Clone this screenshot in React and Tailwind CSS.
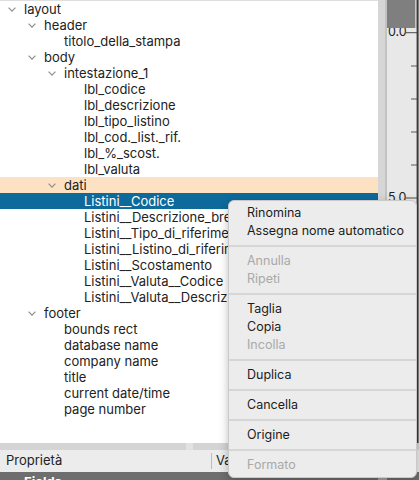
import React from "react";

const rows = [
  { d: 0, t: "layout", c: true },
  { d: 1, t: "header", c: true },
  { d: 2, t: "titolo_della_stampa" },
  { d: 1, t: "body", c: true },
  { d: 2, t: "intestazione_1", c: true },
  { d: 3, t: "lbl_codice" },
  { d: 3, t: "lbl_descrizione" },
  { d: 3, t: "lbl_tipo_listino" },
  { d: 3, t: "lbl_cod._list._rif." },
  { d: 3, t: "lbl_%_scost." },
  { d: 3, t: "lbl_valuta" },
  { d: 2, t: "dati", c: true, peach: true },
  { d: 3, t: "Listini__Codice", sel: true },
  { d: 3, t: "Listini__Descrizione_breve" },
  { d: 3, t: "Listini__Tipo_di_riferimento" },
  { d: 3, t: "Listini__Listino_di_riferimento" },
  { d: 3, t: "Listini__Scostamento" },
  { d: 3, t: "Listini__Valuta__Codice" },
  { d: 3, t: "Listini__Valuta__Descrizione" },
  { d: 1, t: "footer", c: true },
  { d: 2, t: "bounds rect" },
  { d: 2, t: "database name" },
  { d: 2, t: "company name" },
  { d: 2, t: "title" },
  { d: 2, t: "current date/time" },
  { d: 2, t: "page number" },
];

const indent = ["pl-[4px]", "pl-[24px]", "pl-[44px]", "pl-[64px]"];

function Chevron() {
  return (
    <svg width="8" height="5" viewBox="0 0 8 5" className="block">
      <path d="M0.6 0.6 L4 4.2 L7.4 0.6" fill="none" stroke="#8c8c8c" strokeWidth="1.1" />
    </svg>
  );
}

function Row({ r }) {
  const bg = r.sel ? "bg-[#0d6a9b] text-white" : r.peach ? "bg-[#fde1c3] text-[#222]" : "text-[#222]";
  return (
    <div className={`h-4 flex items-center whitespace-nowrap ${indent[r.d]} ${bg}`}>
      <div className="w-4 flex justify-center items-center">{r.c ? <Chevron /> : null}</div>
      <span className="ml-1 leading-4">{r.t}</span>
    </div>
  );
}

function Ruler() {
  const minor = [];
  for (let i = 0; i < 14; i++) {
    const y = 33 + i * 33;
    if (i % 5 === 0) continue;
    minor.push(<line key={i} x1="24" x2="30" y1={y} y2={y} stroke="#5a5a5a" strokeWidth="1" />);
  }
  return (
    <svg width="32" height="443" viewBox="0 0 32 443" className="block shrink-0">
      <rect x="0" y="0" width="32" height="443" fill="#e8e8e8" />
      <text x="1" y="35.5" fontFamily="Inter, sans-serif" fontSize="12.5" fill="#222">0.0</text>
      <line x1="19" x2="30" y1="32.7" y2="32.7" stroke="#4a4a4a" strokeWidth="1" />
      <text x="1" y="202" fontFamily="Inter, sans-serif" fontSize="12.5" fill="#222">5.0</text>
      <line x1="19" x2="30" y1="198" y2="198" stroke="#4a4a4a" strokeWidth="1" />
      <text x="1" y="366" fontFamily="Inter, sans-serif" fontSize="12.5" fill="#222">10.0</text>
      <line x1="19" x2="30" y1="363" y2="363" stroke="#4a4a4a" strokeWidth="1" />
      {minor}
      <rect x="0" y="0" width="28" height="28" fill="#7f7f7f" />
      <rect x="28" y="0" width="1.7" height="28" fill="#c6c6c6" />
      <line x1="30.6" x2="30.6" y1="0" y2="443" stroke="#3a3a3a" strokeWidth="2" />
    </svg>
  );
}

function Item({ children, dis }) {
  return (
    <div className={`h-[18px] flex items-center pl-[18px] whitespace-nowrap text-[12.5px] ${dis ? "text-[#a9a9a9]" : "text-[#1c1c1c]"}`}>
      {children}
    </div>
  );
}

function Sep() {
  return (
    <div className="py-[5px]">
      <div className="h-[2px] bg-[#d6d6d6]" />
    </div>
  );
}

export default function App() {
  return (
    <div
      className="relative w-[419px] h-[480px] overflow-hidden bg-white text-[13px]"
      style={{ fontFamily: "Inter, 'Noto Sans', sans-serif" }}
    >
      <div className="flex flex-col h-full">
        <div className="flex h-[443px] shrink-0">
          <div className="w-[378px] bg-white border-t border-[#dedede] overflow-hidden">
            {rows.map((r, i) => (
              <Row key={i} r={r} />
            ))}
          </div>
          <div className="w-[7px] bg-[#d6d6d6]" />
          <div className="w-[2px] bg-[#c2c2c2]" />
          <Ruler />
        </div>
        <div className="h-[7px] shrink-0 bg-[#d4d4d4] flex">
          <div className="ml-[186px] w-[7px] bg-[#e2e2e2]" />
        </div>
        <div className="h-[22px] shrink-0 bg-[#ececec] flex items-center text-[#222]">
          <span className="pl-[6px] w-[211px]">Proprietà</span>
          <div className="w-px h-[16px] bg-[#bdbdbd]" />
          <span className="pl-[4px]">Valore</span>
        </div>
        <div className="flex-1 min-h-0 overflow-hidden bg-[#6e6e6e] flex">
          <div className="w-[378px] pl-[24px] pt-[2px]">
            <span className="block text-white font-bold leading-4">Fields</span>
          </div>
          <div className="w-[9px] bg-[#a8a8a8]" />
        </div>
      </div>

      <div className="absolute left-[228px] top-[200px] w-[189px] rounded-[6px] bg-[#ececec] border border-[#c9c9c9] shadow-[0_3px_10px_rgba(0,0,0,0.25)] py-[3px]">
        <Item>Rinomina</Item>
        <Item>Assegna nome automatico</Item>
        <Sep />
        <Item dis>Annulla</Item>
        <Item dis>Ripeti</Item>
        <Sep />
        <Item>Taglia</Item>
        <Item>Copia</Item>
        <Item dis>Incolla</Item>
        <Sep />
        <Item>Duplica</Item>
        <Sep />
        <Item>Cancella</Item>
        <Sep />
        <Item>Origine</Item>
        <Sep />
        <Item dis>Formato</Item>
      </div>
    </div>
  );
}
